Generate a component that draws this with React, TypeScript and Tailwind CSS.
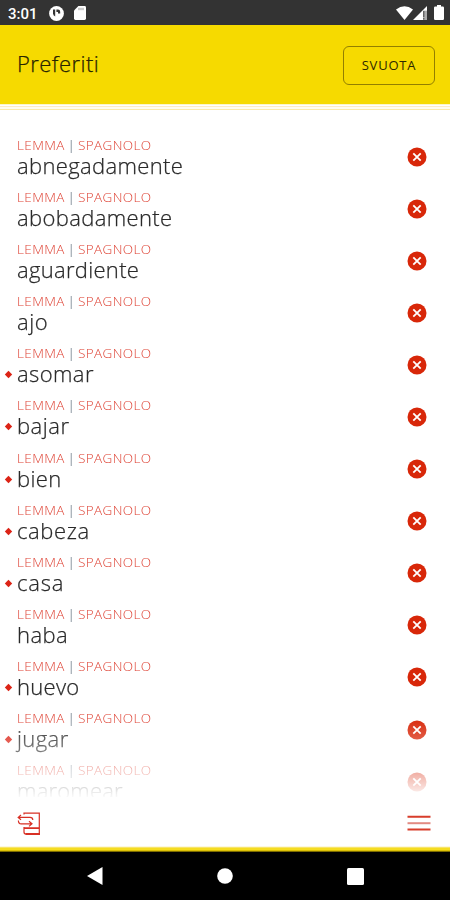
import React from "react";

type Entry = { word: string; marked?: boolean; tracking: string };

const entries: Entry[] = [
  { word: "abnegadamente", tracking: "tracking-[0.35px]" },
  { word: "abobadamente", tracking: "tracking-[0.37px]" },
  { word: "aguardiente", tracking: "tracking-[0.3px]" },
  { word: "ajo", tracking: "tracking-[0.5px]" },
  { word: "asomar", marked: true, tracking: "tracking-[0.4px]" },
  { word: "bajar", marked: true, tracking: "tracking-[0.5px]" },
  { word: "bien", marked: true, tracking: "tracking-[0.4px]" },
  { word: "cabeza", marked: true, tracking: "tracking-[0.6px]" },
  { word: "casa", marked: true, tracking: "tracking-[0.8px]" },
  { word: "haba", tracking: "tracking-[0.4px]" },
  { word: "huevo", marked: true, tracking: "tracking-[0.3px]" },
  { word: "jugar", marked: true, tracking: "tracking-[0.4px]" },
  { word: "maromear", tracking: "tracking-[0.2px]" },
];

function StatusBar() {
  return (
    <div className="flex h-[25px] shrink-0 items-center bg-[#333333] pl-[8px] pr-[6px] text-white">
      <span className="mt-[2px] w-[30px] font-[Roboto,sans-serif] text-[15px] font-medium leading-[16px] whitespace-nowrap">3:01</span>
      <svg className="ml-[11px] mt-[2px]" width="15" height="15" viewBox="0 0 15 15">
        <circle cx="7.5" cy="7.5" r="7.4" fill="#fff" />
        <path d="M4 3.6h2.2v6.8Q4 9.6 4 7.2z" fill="#333" />
        <path d="M7.4 3.6H9a2.2 2.2 0 0 1 2.2 2.2v1.8H9V6H7.4z" fill="#333" />
      </svg>
      <svg className="ml-[10px] mt-[1px]" width="12" height="14" viewBox="0 0 12 14">
        <path d="M4.4 0H10.6Q12 0 12 1.4V12.6Q12 14 10.6 14H1.4Q0 14 0 12.6V4.4z" fill="#fff" />
        <path d="M5 1.8v2.4M7 1.8v2.4M9 1.8v2.4" stroke="#999" strokeWidth="1" />
      </svg>
      <div className="ml-auto flex items-center">
        <svg width="17" height="14" viewBox="0 0 17 14">
          <path d="M0 3.4Q8.5-3 17 3.4L8.5 14z" fill="#fff" />
        </svg>
        <svg width="15" height="14" viewBox="0 0 15 14">
          <path d="M14 0V14H0z" fill="#fff" />
          <path d="M10 4.6h4V14h-4z" fill="#aaa" />
          <path d="M10.8 5v6M10.8 12v1.5" stroke="#444" strokeWidth="1" />
        </svg>
        <svg className="ml-[6px]" width="10" height="15" viewBox="0 0 10 15">
          <path d="M3 0h4v1.6h1.8Q10 1.6 10 2.8v11Q10 15 8.8 15H1.2Q0 15 0 13.8v-11Q0 1.6 1.2 1.6H3z" fill="#fff" />
        </svg>
      </div>
    </div>
  );
}

function Header() {
  return (
    <header className="flex h-[79px] shrink-0 items-center justify-between bg-[#f6da00] pl-[17px] pr-[15px]">
      <h1 className="-mt-[3px] font-['Open_Sans',sans-serif] text-[22px] font-light leading-[30px] tracking-[0.45px] text-[#282400] [-webkit-text-stroke:0.25px]">Preferiti</h1>
      <button className="mt-[2px] flex h-[39px] w-[92px] items-center justify-center rounded-[6px] border border-[#927f00] font-['Open_Sans',sans-serif] text-[13px] tracking-[0.8px] text-[#2d2800]">
        SVUOTA
      </button>
    </header>
  );
}

function Row({ entry }: { entry: Entry }) {
  return (
    <li className="flex h-[52.1px] shrink-0 pl-[4px] pr-[23px]">
      <div className="flex w-[13px] shrink-0 pt-[25px]">
        {entry.marked && (
          <svg width="9" height="9" viewBox="0 0 9 9">
            <path d="M4.5.8 8.2 4.5 4.5 8.2.8 4.5z" fill="#dc2416" />
          </svg>
        )}
      </div>
      <div className="flex grow flex-col items-start font-['Open_Sans',sans-serif] whitespace-nowrap">
        <span className="text-[13.5px] font-light leading-[16px] tracking-[0.4px] [word-spacing:-1.2px] text-[#de4234]">
          LEMMA <span className="text-[#456]">|</span> SPAGNOLO
        </span>
        <span className={`text-[22px] font-light leading-[25px] text-[#2a2a2a] [-webkit-text-stroke:0.25px] ${entry.tracking}`}>{entry.word}</span>
      </div>
      <svg className="mt-[9.5px]" width="20" height="20" viewBox="0 0 20 20">
        <circle cx="10" cy="10" r="9.5" fill="#d82709" />
        <path d="M6.3 6.3l7.4 7.4M13.7 6.3l-7.4 7.4" stroke="#fff" strokeWidth="1.8" />
      </svg>
    </li>
  );
}

function BottomBar() {
  return (
    <footer className="flex h-[49px] shrink-0 items-center justify-between bg-white pl-[17px] pr-[19px]">
      <svg className="mt-[4px]" width="24" height="24" viewBox="0 0 24 24" fill="none" stroke="#d83025" strokeWidth="1.2">
        <path d="M7 2.6V1.2H22.3V22M7 15v5Q7 22 9 22" />
        <path d="M7 16.2h15.3M8.5 22H23" strokeWidth="1.8" />
        <path d="M4 3 1.2 5.4 4 7.8M1.2 5.4H13Q15.8 5.4 15.8 8" />
        <path d="M1.4 8.4Q1.4 11.8 4.2 11.8H15M12 9.2l3 2.6-3 2.6" />
      </svg>
      <svg className="mt-[3px]" width="24" height="16" viewBox="0 0 24 16">
        <path d="M.5 1.8h23M.5 14.5h23" stroke="#d83d2b" strokeWidth="2" />
        <path d="M.5 8.2h23" stroke="#e28b83" strokeWidth="2" />
      </svg>
    </footer>
  );
}

function NavigationBar() {
  return (
    <nav className="grid h-[48px] shrink-0 grid-cols-[190px_70px_190px] items-center justify-items-center bg-black">
      <svg width="16" height="18" viewBox="0 0 16 18">
        <path d="M0 9 15.5 0V18z" fill="#fff" />
      </svg>
      <svg width="16" height="16" viewBox="0 0 16 16">
        <circle cx="8" cy="8" r="7.8" fill="#fff" />
      </svg>
      <svg width="17" height="17" viewBox="0 0 17 17">
        <rect width="17" height="17" rx="1.5" fill="#fff" />
      </svg>
    </nav>
  );
}

export default function App() {
  return (
    <div className="flex h-[900px] w-[450px] flex-col overflow-hidden bg-white">
      <StatusBar />
      <Header />
      <div className="h-[8px] shrink-0 bg-[linear-gradient(to_bottom,#fdf6c8_0_1px,#ffffff_1px_2px,#fdecc4_2px_3px,#fffdf0_3px_5px,#fbe9a8_5px_6px,#ffffff_6px_8px)]" />
      <main className="h-[685px] shrink-0 overflow-hidden [mask-image:linear-gradient(to_bottom,#000_605px,rgba(0,0,0,0.75)_628px,rgba(0,0,0,0.45)_655px,transparent_687px)]">
        <ul className="flex flex-col pt-[25px]">
          {entries.map((entry) => (
            <Row key={entry.word} entry={entry} />
          ))}
        </ul>
      </main>
      <BottomBar />
      <div className="h-[6px] shrink-0 bg-[linear-gradient(to_bottom,#fdf8dc_0_1px,#f7e468_1px_2px,#f5dc20_2px_4px,#dcc006_4px_5px,#7d6c00_5px_6px)]" />
      <NavigationBar />
    </div>
  );
}
